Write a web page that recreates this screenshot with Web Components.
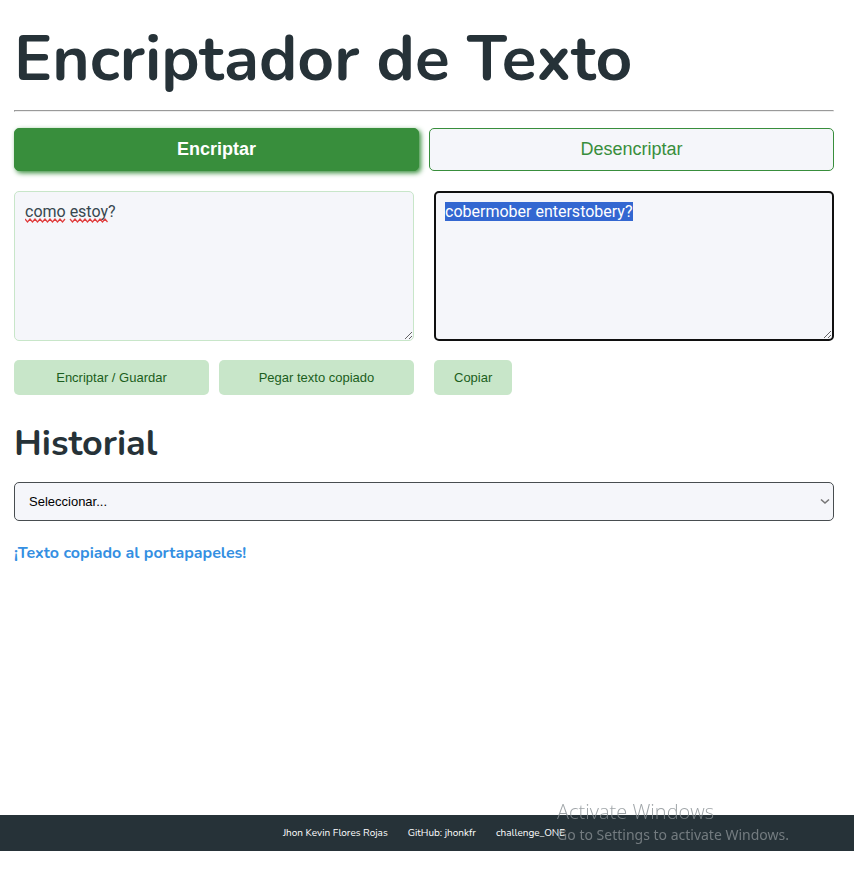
<!DOCTYPE html>
<html lang="es">
<head>
<meta charset="utf-8">
<meta name="viewport" content="width=device-width, initial-scale=1">
<title>Encriptador de Texto</title>
<style>
  body { margin: 0; background: #fff; color: #263238; --display: Nunito, Lato, sans-serif; --ui: Arial, "Liberation Sans", sans-serif; --surface: #f5f6fa; --green: #388e3c; font-family: var(--display); }
</style>
</head>
<body>
<encriptador-app></encriptador-app>
<script>
const define = (name, html, setup) => {
  const template = document.createElement('template');
  template.innerHTML = '<style>*{box-sizing:border-box}</style>' + html;
  customElements.define(name, class extends HTMLElement {
    constructor() {
      super();
      this.attachShadow({ mode: 'open' }).append(template.content.cloneNode(true));
    }
    connectedCallback() { if (setup) setup(this, this.shadowRoot); }
  });
};

define('mode-tab', `
<style>
  :host { display: block; flex: 1 1 0; }
  button { display: block; width: 100%; height: 43px; border: 1px solid var(--green); border-radius: 5px; background: var(--surface); color: var(--green); font: 18px var(--ui); padding: 0 10px; }
  :host([active]) button { background: var(--green); color: #fff; font-weight: 700; box-shadow: 2px 2px 5px var(--green); }
</style>
<button type="button"><slot></slot></button>`);

define('action-button', `
<style>
  :host { display: block; }
  button { display: block; width: 100%; height: 35px; border: 0; border-radius: 5px; padding: 0 20px; background: #c8e6c9; color: #1b5e20; font: 13px var(--ui); }
</style>
<button type="button"><slot></slot></button>`);

define('text-panel', `
<style>
  :host { display: block; position: relative; }
  textarea { display: block; width: 100%; height: 150px; padding: 10px; border: 1px solid #c8e6c9; border-radius: 5px; outline: 0; background: var(--surface); color: #37474f; font: 400 16px/19px Roboto, sans-serif; resize: vertical; }
  :host([selected]) textarea { border: 2px solid #101010; padding: 9px; }
  textarea::selection { background: #3367d1; color: #fff; }
  svg { position: absolute; left: 11px; top: 27px; pointer-events: none; }
  :host([selected]) svg { display: none; }
</style>
<textarea spellcheck="false"></textarea>
<svg width="84" height="5" fill="none" stroke="#e03c3c" stroke-width="1.2" aria-hidden="true">
  <path d="M0 1l2.5 3 2.5-3 2.5 3 2.5-3 2.5 3 2.5-3 2.5 3 2.5-3 2.5 3 2.5-3 2.5 3 2.5-3 2.5 3 2.5-3 2.5 3 2.5-3M45 1l2.5 3 2.5-3 2.5 3 2.5-3 2.5 3 2.5-3 2.5 3 2.5-3 2.5 3 2.5-3 2.5 3 2.5-3 2.5 3 2.5-3 2.5 3"/>
</svg>`, (host, root) => {
  const area = root.querySelector('textarea');
  area.setAttribute('aria-label', host.getAttribute('label'));
  area.value = host.getAttribute('value');
  if (host.hasAttribute('selected')) { area.focus(); area.select(); }
});

define('history-select', `
<style>
  :host { display: block; position: relative; }
  h2 { margin: 0 0 12px; font: 700 36px/52px var(--display); }
  select { appearance: none; display: block; width: 100%; height: 39px; padding: 0 14px; border: 1px solid #484d50; border-radius: 5px; background: var(--surface); color: #000; font: 13px var(--ui); }
  svg { position: absolute; right: 4px; bottom: 16px; pointer-events: none; }
</style>
<h2 id="title">Historial</h2>
<select aria-labelledby="title"><option>Seleccionar...</option></select>
<svg width="10" height="7" viewBox="0 0 10 7" fill="none" stroke="#767676" stroke-width="1.6" aria-hidden="true"><path d="M1 1.5l4 3.5 4-3.5"/></svg>`);

define('site-footer', `
<style>
  footer { display: flex; justify-content: center; align-items: center; gap: 20px; height: 36px; padding-right: 6px; background: #263238; color: #fff; font: 10px/14px var(--display); }
  a { color: inherit; text-decoration: none; }
  :host { display: block; margin-top: auto; }
</style>
<footer><span>Jhon Kevin Flores Rojas</span><a href="#github">GitHub: jhonkfr</a><a href="#challenge">challenge_ONE</a></footer>`);

define('activation-notice', `
<style>
  :host { display: block; position: fixed; right: 69px; bottom: 29px; color: #878e92; opacity: .8; pointer-events: none; font-family: "Segoe UI", "Noto Sans", sans-serif; }
  strong, span { display: block; white-space: nowrap; }
  strong { font: 300 20px/24px "Segoe UI", "Open Sans", sans-serif; }
  span { font-size: 14px; line-height: 21px; }
</style>
<strong>Activate Windows</strong><span>Go to Settings to activate Windows.</span>`);

define('encriptador-app', `
<style>
  :host { display: flex; flex-direction: column; min-height: 100vh; padding: 0 4px 23px 0; box-sizing: border-box; }
  main { padding: 14px 20px 20px 14px; }
  h1 { margin: 0; font: 700 64px/90px var(--display); }
  hr { margin: 6px 0 16px; }
  .tabs { display: flex; gap: 10px; margin-bottom: 20px; }
  .panels { display: grid; grid-template-columns: 1fr 1fr; gap: 19px 20px; margin-bottom: 23px; }
  .actions { display: flex; gap: 10px; }
  .wide { flex: 1; }
  p { margin: 21px 0 0; color: #348fe2; font: 700 16px/22px var(--display); }
</style>
<main>
  <h1>Encriptador de Texto</h1>
  <hr>
  <div class="tabs"><mode-tab active>Encriptar</mode-tab><mode-tab>Desencriptar</mode-tab></div>
  <div class="panels">
    <text-panel label="Texto original" value="como estoy?"></text-panel>
    <text-panel label="Resultado" value="cobermober enterstobery?" selected></text-panel>
    <div class="actions"><action-button class="wide">Encriptar / Guardar</action-button><action-button class="wide">Pegar texto copiado</action-button></div>
    <div class="actions"><action-button>Copiar</action-button></div>
  </div>
  <history-select></history-select>
  <p role="status">¡Texto copiado al portapapeles!</p>
</main>
<site-footer></site-footer>
<activation-notice></activation-notice>`);
</script>
</body>
</html>
